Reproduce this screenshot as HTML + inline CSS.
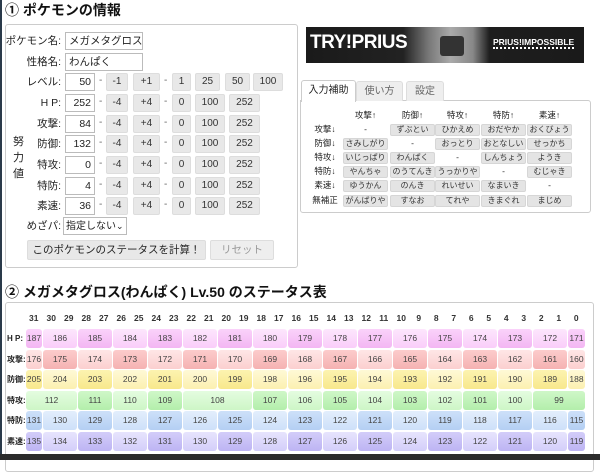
<!DOCTYPE html>
<html><head><meta charset="utf-8">
<style>
*{margin:0;padding:0;box-sizing:border-box}
body{width:600px;height:460px;overflow:hidden;background:#fff;position:relative;font-family:"Liberation Sans","Noto Sans CJK JP",sans-serif;color:#222}
.a{position:absolute}
h2{position:absolute;font-size:14px;font-weight:bold;left:5px;white-space:nowrap;color:#111}
.box{position:absolute;border:1px solid #ccc;border-radius:3px;background:#fff}
.lb{position:absolute;font-size:10.5px;text-align:right;width:60px;left:1px;line-height:14px;white-space:nowrap}
.in{position:absolute;border:1px solid #bbb;background:#fff;font-size:10.5px;height:18px;line-height:16px;padding:0 3px;white-space:nowrap;overflow:hidden}
.r{text-align:right}
.b{position:absolute;background:#e8e8e8;border:1px solid #ddd;border-radius:2px;font-size:10px;text-align:center;height:18px;line-height:16px;color:#333;white-space:nowrap}
.ds{position:absolute;font-size:10px;color:#666}
.tb{position:absolute;font-size:8.5px;text-align:center;line-height:11px;white-space:nowrap}
.nb{position:absolute;background:#e4e4e4;border:1px solid #d6d6d6;border-radius:2px;font-size:8px;text-align:center;height:12px;line-height:10px;width:45px;color:#333;white-space:nowrap;overflow:hidden}
.hd{position:absolute;top:313px;font-size:8.5px;font-weight:bold;width:17.5px;text-align:center;color:#333}
.row{position:absolute;left:0;width:600px;height:19px}
.row .c{position:absolute;top:0;height:19px;line-height:19px;font-size:8.5px;text-align:center;border-radius:3px;color:#444}
.row .l{position:absolute;left:7px;top:0;line-height:19px;font-size:8px;font-weight:bold}
.hp .c{background:linear-gradient(#fde6fd,#f9cdf9)}.hp .d{background:linear-gradient(#fad2fa,#f3b6f3)}
.at .c{background:linear-gradient(#fee6e6,#fbcfcf)}.at .d{background:linear-gradient(#fccccc,#f5b2b2)}
.df .c{background:linear-gradient(#fef9d6,#fcf0b0)}.df .d{background:linear-gradient(#fcf3b0,#f8e88c)}
.sa .c{background:linear-gradient(#e4fce0,#cdf6c6)}.sa .d{background:linear-gradient(#cff7c8,#b3eeab)}
.sd .c{background:linear-gradient(#e3eefc,#cde0f9)}.sd .d{background:linear-gradient(#cde0f9,#b4cff3)}
.sp .c{background:linear-gradient(#e7e4fd,#d3cefa)}.sp .d{background:linear-gradient(#d3cdf9,#bdb4f3)}
</style></head><body>
<div class="a" style="left:0;top:0;width:2px;height:460px;background:#2a3a4a"></div>
<h2 style="top:0px">① ポケモンの情報</h2>
<div class="box" style="left:5px;top:24px;width:293px;height:244px"></div>
<div class="lb" style="top:34px">ポケモン名:</div><div class="in" style="left:65px;top:32px;width:78px">メガメタグロス</div>
<div class="lb" style="top:55px">性格名:</div><div class="in" style="left:65px;top:53px;width:78px">わんぱく</div>
<div class="lb" style="top:75px">レベル:</div><div class="in r" style="left:65px;top:73px;width:30px">50</div>
<div class="ds" style="left:99px;top:75px">-</div><div class="b" style="left:106px;top:73px;width:22px">-1</div><div class="b" style="left:133px;top:73px;width:27px">+1</div>
<div class="ds" style="left:164px;top:75px">-</div><div class="b" style="left:172px;top:73px;width:19px">1</div><div class="b" style="left:195px;top:73px;width:25px">25</div><div class="b" style="left:225px;top:73px;width:25px">50</div><div class="b" style="left:253px;top:73px;width:30px">100</div>

<div class="lb" style="top:96px">H P:</div><div class="in r" style="left:65px;top:94px;width:30px">252</div>
<div class="ds" style="left:99px;top:96px">-</div><div class="b" style="left:106px;top:94px;width:22px">-4</div><div class="b" style="left:133px;top:94px;width:27px">+4</div><div class="ds" style="left:164px;top:96px">-</div><div class="b" style="left:172px;top:94px;width:19px">0</div><div class="b" style="left:195px;top:94px;width:30px">100</div><div class="b" style="left:229px;top:94px;width:31px">252</div>

<div class="lb" style="top:117px">攻撃:</div><div class="in r" style="left:65px;top:115px;width:30px">84</div>
<div class="ds" style="left:99px;top:117px">-</div><div class="b" style="left:106px;top:115px;width:22px">-4</div><div class="b" style="left:133px;top:115px;width:27px">+4</div><div class="ds" style="left:164px;top:117px">-</div><div class="b" style="left:172px;top:115px;width:19px">0</div><div class="b" style="left:195px;top:115px;width:30px">100</div><div class="b" style="left:229px;top:115px;width:31px">252</div>

<div class="lb" style="top:137px">防御:</div><div class="in r" style="left:65px;top:135px;width:30px">132</div>
<div class="ds" style="left:99px;top:137px">-</div><div class="b" style="left:106px;top:135px;width:22px">-4</div><div class="b" style="left:133px;top:135px;width:27px">+4</div><div class="ds" style="left:164px;top:137px">-</div><div class="b" style="left:172px;top:135px;width:19px">0</div><div class="b" style="left:195px;top:135px;width:30px">100</div><div class="b" style="left:229px;top:135px;width:31px">252</div>

<div class="lb" style="top:158px">特攻:</div><div class="in r" style="left:65px;top:156px;width:30px">0</div>
<div class="ds" style="left:99px;top:158px">-</div><div class="b" style="left:106px;top:156px;width:22px">-4</div><div class="b" style="left:133px;top:156px;width:27px">+4</div><div class="ds" style="left:164px;top:158px">-</div><div class="b" style="left:172px;top:156px;width:19px">0</div><div class="b" style="left:195px;top:156px;width:30px">100</div><div class="b" style="left:229px;top:156px;width:31px">252</div>

<div class="lb" style="top:179px">特防:</div><div class="in r" style="left:65px;top:177px;width:30px">4</div>
<div class="ds" style="left:99px;top:179px">-</div><div class="b" style="left:106px;top:177px;width:22px">-4</div><div class="b" style="left:133px;top:177px;width:27px">+4</div><div class="ds" style="left:164px;top:179px">-</div><div class="b" style="left:172px;top:177px;width:19px">0</div><div class="b" style="left:195px;top:177px;width:30px">100</div><div class="b" style="left:229px;top:177px;width:31px">252</div>

<div class="lb" style="top:199px">素速:</div><div class="in r" style="left:65px;top:197px;width:30px">36</div>
<div class="ds" style="left:99px;top:199px">-</div><div class="b" style="left:106px;top:197px;width:22px">-4</div><div class="b" style="left:133px;top:197px;width:27px">+4</div><div class="ds" style="left:164px;top:199px">-</div><div class="b" style="left:172px;top:197px;width:19px">0</div><div class="b" style="left:195px;top:197px;width:30px">100</div><div class="b" style="left:229px;top:197px;width:31px">252</div>

<div class="a" style="left:13px;top:134px;font-size:11px;line-height:16px;width:12px">努<br>力<br>値</div>
<div class="lb" style="top:219px">めざパ:</div>
<div class="in" style="left:63px;top:217px;width:64px;height:18px;padding:0 2px;font-size:10px">指定しない<span style="font-size:9px">⌄</span></div>
<div class="b" style="left:27px;top:240px;width:179px;height:20px;line-height:18px;font-size:10.5px;color:#222">このポケモンのステータスを計算！</div>
<div class="b" style="left:210px;top:240px;width:64px;height:20px;line-height:18px;font-size:10.5px;color:#999;background:#eee">リセット</div>

<!-- ad -->
<div class="a" style="left:306px;top:27px;width:278px;height:36px;background:linear-gradient(90deg,#1a1a1a 0,#222 35%,#777 44%,#aaa 52%,#888 60%,#1e1e1e 66%,#1a1a1a 100%)"></div>
<div class="a" style="left:310px;top:31px;color:#fff;font-weight:bold;font-size:19px;line-height:24px;letter-spacing:-0.5px">TRY!PRIUS</div>
<div class="a" style="left:493px;top:37px;color:#fff;font-weight:bold;font-size:8.5px;line-height:10px;border-bottom:2px dotted #fff;white-space:nowrap">PRIUS!IMPOSSIBLE</div>
<div class="a" style="left:440px;top:36px;width:24px;height:20px;background:#333;border-radius:3px"></div>

<!-- tabs -->
<div class="box" style="left:300px;top:100px;width:291px;height:113px;border-radius:0 3px 3px 3px"></div>
<div class="a" style="left:356px;top:81px;width:47px;height:20px;background:#eee;border:1px solid #ddd;border-bottom:none;border-radius:3px 3px 0 0;font-size:10px;text-align:center;line-height:19px;color:#666">使い方</div>
<div class="a" style="left:406px;top:81px;width:38px;height:20px;background:#eee;border:1px solid #ddd;border-bottom:none;border-radius:3px 3px 0 0;font-size:10px;text-align:center;line-height:19px;color:#666">設定</div>
<div class="a" style="left:301px;top:80px;width:55px;height:22px;background:#fff;border:1px solid #ccc;border-bottom:none;border-radius:3px 3px 0 0;font-size:10px;text-align:center;line-height:20px">入力補助</div>

<div class="tb" style="left:343px;top:110px;width:45px">攻撃↑</div>
<div class="tb" style="left:390px;top:110px;width:45px">防御↑</div>
<div class="tb" style="left:435px;top:110px;width:45px">特攻↑</div>
<div class="tb" style="left:481px;top:110px;width:45px">特防↑</div>
<div class="tb" style="left:527px;top:110px;width:45px">素速↑</div>

<div class="tb" style="left:310px;top:124px;width:30px">攻撃↓</div>
<div class="tb" style="left:343px;top:124px;width:45px">-</div><div class="nb" style="left:390px;top:124px">ずぶとい</div><div class="nb" style="left:435px;top:124px">ひかえめ</div><div class="nb" style="left:481px;top:124px">おだやか</div><div class="nb" style="left:527px;top:124px">おくびょう</div>
<div class="tb" style="left:310px;top:138px;width:30px">防御↓</div>
<div class="nb" style="left:343px;top:138px">さみしがり</div><div class="tb" style="left:390px;top:138px;width:45px">-</div><div class="nb" style="left:435px;top:138px">おっとり</div><div class="nb" style="left:481px;top:138px">おとなしい</div><div class="nb" style="left:527px;top:138px">せっかち</div>
<div class="tb" style="left:310px;top:152px;width:30px">特攻↓</div>
<div class="nb" style="left:343px;top:152px">いじっぱり</div><div class="nb" style="left:390px;top:152px">わんぱく</div><div class="tb" style="left:435px;top:152px;width:45px">-</div><div class="nb" style="left:481px;top:152px">しんちょう</div><div class="nb" style="left:527px;top:152px">ようき</div>
<div class="tb" style="left:310px;top:166px;width:30px">特防↓</div>
<div class="nb" style="left:343px;top:166px">やんちゃ</div><div class="nb" style="left:390px;top:166px">のうてんき</div><div class="nb" style="left:435px;top:166px">うっかりや</div><div class="tb" style="left:481px;top:166px;width:45px">-</div><div class="nb" style="left:527px;top:166px">むじゃき</div>
<div class="tb" style="left:310px;top:180px;width:30px">素速↓</div>
<div class="nb" style="left:343px;top:180px">ゆうかん</div><div class="nb" style="left:390px;top:180px">のんき</div><div class="nb" style="left:435px;top:180px">れいせい</div><div class="nb" style="left:481px;top:180px">なまいき</div><div class="tb" style="left:527px;top:180px;width:45px">-</div>
<div class="tb" style="left:310px;top:195px;width:30px">無補正</div>
<div class="nb" style="left:343px;top:195px">がんばりや</div><div class="nb" style="left:390px;top:195px">すなお</div><div class="nb" style="left:435px;top:195px">てれや</div><div class="nb" style="left:481px;top:195px">きまぐれ</div><div class="nb" style="left:527px;top:195px">まじめ</div>

<!-- section 2 -->
<h2 style="top:282px">② メガメタグロス(わんぱく) Lv.50 のステータス表</h2>
<div class="box" style="left:5px;top:302px;width:589px;height:170px"></div>
<div class="hd" style="left:25px">31</div><div class="hd" style="left:42.5px">30</div><div class="hd" style="left:60px">29</div><div class="hd" style="left:77.5px">28</div><div class="hd" style="left:95px">27</div><div class="hd" style="left:112.5px">26</div><div class="hd" style="left:130px">25</div><div class="hd" style="left:147.5px">24</div><div class="hd" style="left:165px">23</div><div class="hd" style="left:182.5px">22</div><div class="hd" style="left:200px">21</div><div class="hd" style="left:217.5px">20</div><div class="hd" style="left:235px">19</div><div class="hd" style="left:252.5px">18</div><div class="hd" style="left:270px">17</div><div class="hd" style="left:287.5px">16</div><div class="hd" style="left:305px">15</div><div class="hd" style="left:322.5px">14</div><div class="hd" style="left:340px">13</div><div class="hd" style="left:357.5px">12</div><div class="hd" style="left:375px">11</div><div class="hd" style="left:392.5px">10</div><div class="hd" style="left:410px">9</div><div class="hd" style="left:427.5px">8</div><div class="hd" style="left:445px">7</div><div class="hd" style="left:462.5px">6</div><div class="hd" style="left:480px">5</div><div class="hd" style="left:497.5px">4</div><div class="hd" style="left:515px">3</div><div class="hd" style="left:532.5px">2</div><div class="hd" style="left:550px">1</div><div class="hd" style="left:567.5px">0</div>

<div class="row hp" style="top:329px"><div class="l">H P:</div>
<div class="c d" style="left:26px;width:16px">187</div><div class="c" style="left:43px;width:34px">186</div><div class="c d" style="left:78px;width:34px">185</div><div class="c" style="left:113px;width:34px">184</div><div class="c d" style="left:148px;width:34px">183</div><div class="c" style="left:183px;width:34px">182</div><div class="c d" style="left:218px;width:34px">181</div><div class="c" style="left:253px;width:34px">180</div><div class="c d" style="left:288px;width:34px">179</div><div class="c" style="left:323px;width:34px">178</div><div class="c d" style="left:358px;width:34px">177</div><div class="c" style="left:393px;width:34px">176</div><div class="c d" style="left:428px;width:34px">175</div><div class="c" style="left:463px;width:34px">174</div><div class="c d" style="left:498px;width:34px">173</div><div class="c" style="left:533px;width:34px">172</div><div class="c d" style="left:568px;width:17px">171</div></div>

<div class="row at" style="top:349.5px"><div class="l">攻撃:</div>
<div class="c" style="left:26px;width:16px">176</div><div class="c d" style="left:43px;width:34px">175</div><div class="c" style="left:78px;width:34px">174</div><div class="c d" style="left:113px;width:34px">173</div><div class="c" style="left:148px;width:34px">172</div><div class="c d" style="left:183px;width:34px">171</div><div class="c" style="left:218px;width:34px">170</div><div class="c d" style="left:253px;width:34px">169</div><div class="c" style="left:288px;width:34px">168</div><div class="c d" style="left:323px;width:34px">167</div><div class="c" style="left:358px;width:34px">166</div><div class="c d" style="left:393px;width:34px">165</div><div class="c" style="left:428px;width:34px">164</div><div class="c d" style="left:463px;width:34px">163</div><div class="c" style="left:498px;width:34px">162</div><div class="c d" style="left:533px;width:34px">161</div><div class="c" style="left:568px;width:17px">160</div></div>

<div class="row df" style="top:370px"><div class="l">防御:</div>
<div class="c d" style="left:26px;width:16px">205</div><div class="c" style="left:43px;width:34px">204</div><div class="c d" style="left:78px;width:34px">203</div><div class="c" style="left:113px;width:34px">202</div><div class="c d" style="left:148px;width:34px">201</div><div class="c" style="left:183px;width:34px">200</div><div class="c d" style="left:218px;width:34px">199</div><div class="c" style="left:253px;width:34px">198</div><div class="c" style="left:288px;width:34px">196</div><div class="c d" style="left:323px;width:34px">195</div><div class="c" style="left:358px;width:34px">194</div><div class="c d" style="left:393px;width:34px">193</div><div class="c" style="left:428px;width:34px">192</div><div class="c d" style="left:463px;width:34px">191</div><div class="c" style="left:498px;width:34px">190</div><div class="c d" style="left:533px;width:34px">189</div><div class="c" style="left:568px;width:17px">188</div></div>

<div class="row sa" style="top:390.5px"><div class="l">特攻:</div>
<div class="c" style="left:26px;width:51px">112</div><div class="c d" style="left:78px;width:34px">111</div><div class="c" style="left:113px;width:34px">110</div><div class="c d" style="left:148px;width:34px">109</div><div class="c" style="left:183px;width:69px">108</div><div class="c d" style="left:253px;width:34px">107</div><div class="c" style="left:288px;width:34px">106</div><div class="c d" style="left:323px;width:34px">105</div><div class="c" style="left:358px;width:34px">104</div><div class="c d" style="left:393px;width:34px">103</div><div class="c" style="left:428px;width:34px">102</div><div class="c d" style="left:463px;width:34px">101</div><div class="c" style="left:498px;width:34px">100</div><div class="c d" style="left:533px;width:52px">99</div></div>

<div class="row sd" style="top:411px"><div class="l">特防:</div>
<div class="c d" style="left:26px;width:16px">131</div><div class="c" style="left:43px;width:34px">130</div><div class="c d" style="left:78px;width:34px">129</div><div class="c" style="left:113px;width:34px">128</div><div class="c d" style="left:148px;width:34px">127</div><div class="c" style="left:183px;width:34px">126</div><div class="c d" style="left:218px;width:34px">125</div><div class="c" style="left:253px;width:34px">124</div><div class="c d" style="left:288px;width:34px">123</div><div class="c" style="left:323px;width:34px">122</div><div class="c d" style="left:358px;width:34px">121</div><div class="c" style="left:393px;width:34px">120</div><div class="c d" style="left:428px;width:34px">119</div><div class="c" style="left:463px;width:34px">118</div><div class="c d" style="left:498px;width:34px">117</div><div class="c" style="left:533px;width:34px">116</div><div class="c d" style="left:568px;width:17px">115</div></div>

<div class="row sp" style="top:431.5px"><div class="l">素速:</div>
<div class="c d" style="left:26px;width:16px">135</div><div class="c" style="left:43px;width:34px">134</div><div class="c d" style="left:78px;width:34px">133</div><div class="c" style="left:113px;width:34px">132</div><div class="c d" style="left:148px;width:34px">131</div><div class="c" style="left:183px;width:34px">130</div><div class="c d" style="left:218px;width:34px">129</div><div class="c" style="left:253px;width:34px">128</div><div class="c d" style="left:288px;width:34px">127</div><div class="c" style="left:323px;width:34px">126</div><div class="c d" style="left:358px;width:34px">125</div><div class="c" style="left:393px;width:34px">124</div><div class="c d" style="left:428px;width:34px">123</div><div class="c" style="left:463px;width:34px">122</div><div class="c d" style="left:498px;width:34px">121</div><div class="c" style="left:533px;width:34px">120</div><div class="c d" style="left:568px;width:17px">119</div></div>

<div class="a" style="left:0;top:454px;width:600px;height:6px;background:#2b2b2b"></div>
</body></html>
